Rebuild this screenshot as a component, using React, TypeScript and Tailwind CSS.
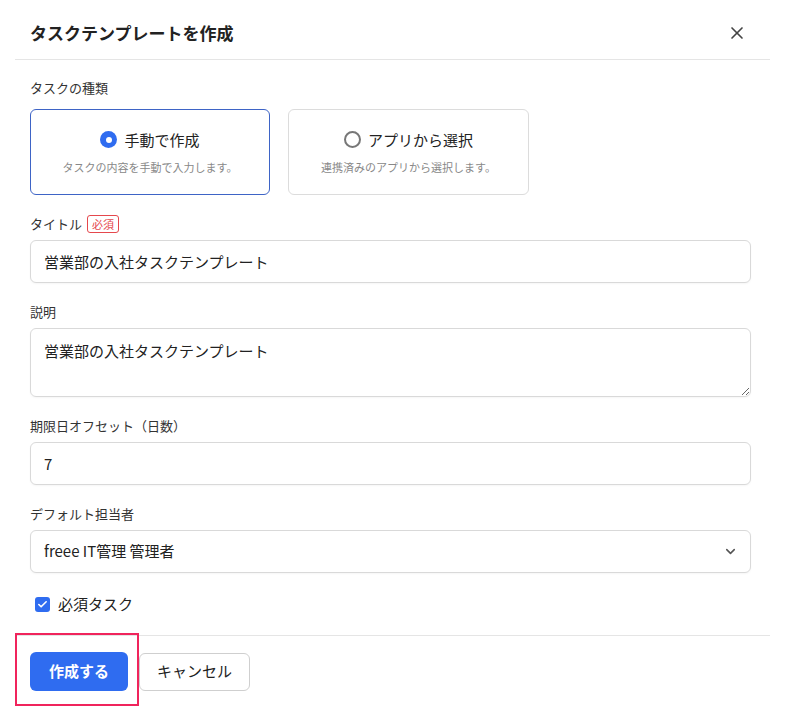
import { Check, ChevronDown, X } from 'lucide-react'

const font = { fontFamily: '"Noto Sans CJK JP", "Noto Sans", sans-serif' }

function Label({ children }: { children: React.ReactNode }) {
  return (
    <div className="h-[20px] mb-[6px] flex items-center gap-[5px] text-[13px] text-[#333]">
      {children}
    </div>
  )
}

const inputClass =
  'w-full h-[43px] rounded-[6px] border border-[#d9d9d9] bg-white pl-[13px] text-[15px] text-[#222] shadow-[0_1px_2px_rgba(0,0,0,0.04)] outline-none'

interface TypeCardProps {
  title: string
  desc: string
  selected?: boolean
  width: string
}

function TypeCard({ title, desc, selected, width }: TypeCardProps) {
  return (
    <div
      className={`${width} h-[86px] rounded-[6px] flex flex-col items-center justify-center gap-[8px] border ${
        selected ? 'border-[#3e64c6]' : 'border-[#dcdcdc]'
      }`}
    >
      <div className="flex items-center gap-[7px]">
        {selected ? (
          <span className="w-[17px] h-[17px] rounded-full bg-[#2f6cf0] flex items-center justify-center">
            <span className="w-[6px] h-[6px] rounded-full bg-white" />
          </span>
        ) : (
          <span className="w-[17px] h-[17px] rounded-full border-2 border-[#777]" />
        )}
        <span className="text-[15px] text-[#222]">{title}</span>
      </div>
      <p className="text-[11px] text-[#888]">{desc}</p>
    </div>
  )
}

export default function App() {
  return (
    <div className="relative w-[790px] h-[720px] bg-white" style={font}>
      <div className="ml-[15px] w-[755px]">
        {/* header */}
        <div className="flex items-center justify-between pl-[15px] pr-[23px] pt-[20px] pb-[14px] border-b border-[#e5e5e5]">
          <h2 className="text-[17px] leading-[25px] font-bold text-[#222]">タスクテンプレートを作成</h2>
          <X size={20} strokeWidth={2} className="text-[#444]" />
        </div>

        {/* body */}
        <div className="pl-[15px] pr-[19px] pt-[18px]">
          <div className="h-[20px] mb-[11px] flex items-center text-[13px] text-[#333]">タスクの種類</div>
          <div className="flex gap-[18px]">
            <TypeCard width="w-[240px]" selected title="手動で作成" desc="タスクの内容を手動で入力します。" />
            <TypeCard width="w-[241px]" title="アプリから選択" desc="連携済みのアプリから選択します。" />
          </div>

          <div className="mt-[19px]">
            <Label>
              タイトル
              <span className="h-[18px] px-[4px] rounded-[3px] border border-[#e5484d] text-[11px] leading-[16px] text-[#e5484d]">
                必須
              </span>
            </Label>
            <input className={inputClass} defaultValue="営業部の入社タスクテンプレート" readOnly />
          </div>

          <div className="mt-[19px]">
            <Label>説明</Label>
            <textarea
              className="block w-full h-[69px] rounded-[6px] border border-[#d9d9d9] px-[13px] py-[11px] text-[15px] leading-[21px] text-[#222] shadow-[0_1px_2px_rgba(0,0,0,0.04)] outline-none"
              defaultValue="営業部の入社タスクテンプレート"
              readOnly
            />
          </div>

          <div className="mt-[19px]">
            <Label>期限日オフセット（日数）</Label>
            <input className={inputClass} defaultValue="7" readOnly />
          </div>

          <div className="mt-[19px]">
            <Label>デフォルト担当者</Label>
            <div className={`${inputClass} flex items-center justify-between pr-[12px]`}>
              <span>freee IT管理 管理者</span>
              <ChevronDown size={15} strokeWidth={2.5} className="text-[#555]" />
            </div>
          </div>

          <div className="mt-[21px] h-[20px] flex items-center gap-[8px] pl-[5px]">
            <span className="w-[15px] h-[15px] rounded-[3px] bg-[#2f6cf0] flex items-center justify-center">
              <Check size={11} strokeWidth={3.5} className="text-white" />
            </span>
            <span className="text-[15px] text-[#222]">必須タスク</span>
          </div>
        </div>

        {/* footer */}
        <div className="mt-[21px] border-t border-[#e5e5e5] pl-[15px] pt-[16px] flex items-center gap-[11px]">
          <button className="w-[98px] h-[39px] rounded-[6px] bg-[#2f6cf0] text-white text-[15px] font-bold">
            作成する
          </button>
          <button className="w-[111px] h-[38px] rounded-[6px] border border-[#cfcfcf] bg-white text-[15px] text-[#222]">
            キャンセル
          </button>
        </div>
      </div>

      {/* highlight annotation */}
      <div className="absolute left-[15px] top-[633px] w-[124px] h-[73px] border-2 border-[#f0245c]" />
    </div>
  )
}
